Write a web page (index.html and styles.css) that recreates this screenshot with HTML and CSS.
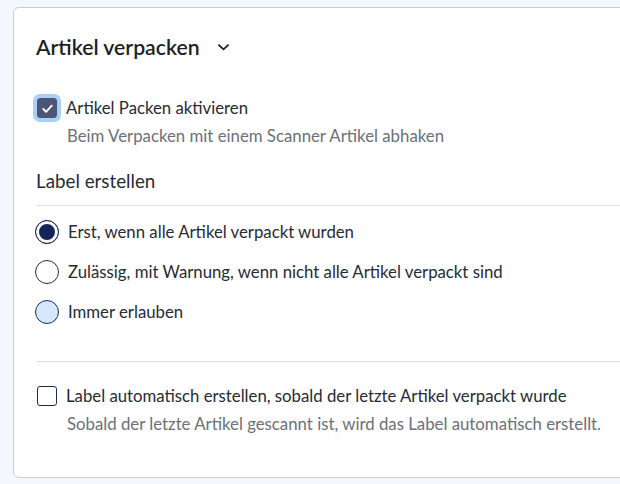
FILE: index.html
```html
<!doctype html>
<head>
	<meta charset="utf-8">
	<meta name="viewport" content="width=device-width, initial-scale=1.0">

	<title>Artikel verpacken</title>

	<link rel="stylesheet" href="styles.css">
</head>
<body>
	<section class="card">
		<h2 class="card-title">
			Artikel verpacken
			<svg class="chevron" viewBox="0 0 14 8" focusable="false">
				<path d="M1.5 1.5l5.5 5 5.5-5"></path>
			</svg>
		</h2>

		<div class="option">
			<label class="option-row">
				<span class="checkbox checked focused">
					<svg viewBox="0 0 16 16" focusable="false">
						<path d="M3.5 8.5l3 3 6-6.5"></path>
					</svg>
				</span>
				Artikel Packen aktivieren
			</label>
			<p class="option-hint">Beim Verpacken mit einem Scanner Artikel abhaken</p>
		</div>

		<h3 class="group-title">Label erstellen</h3>

		<div class="radio-list">
			<label class="option-row">
				<span class="radio selected"></span>
				Erst, wenn alle Artikel verpackt wurden
			</label>
			<label class="option-row">
				<span class="radio"></span>
				Zulässig, mit Warnung, wenn nicht alle Artikel verpackt sind
			</label>
			<label class="option-row">
				<span class="radio hover"></span>
				Immer erlauben
			</label>
		</div>

		<hr class="divider">

		<div class="option">
			<label class="option-row">
				<span class="checkbox"></span>
				Label automatisch erstellen, sobald der letzte Artikel verpackt wurde
			</label>
			<p class="option-hint">Sobald der letzte Artikel gescannt ist, wird das Label automatisch erstellt.</p>
		</div>
	</section>
</body>
</html>
```

FILE: styles.css
```css
body {
	margin: 0;
	overflow: hidden;
	background-color: #f4f8fd;
	font-family: Lato, "Noto Sans", sans-serif;
	color: #262b36;
}

.card {
	box-sizing: border-box;
	width: 620px;
	height: 471px;
	margin: 7px 0 0 13px;
	padding: 25px 0 0 22px;
	background-color: #fff;
	border: 1px solid #c9ccd1;
	border-radius: 6px;
}

.card-title {
	display: flex;
	align-items: center;
	gap: 17px;
	margin: 0;
	font-size: 21.2px;
	font-weight: 600;
	line-height: 28px;
	color: #1d1f24;
}

.chevron {
	width: 13px;
	height: 8px;
	fill: none;
	stroke: #1d1f24;
	stroke-width: 2;
}

.option {
	margin-top: 35px;
}

.option-row {
	display: flex;
	align-items: center;
	gap: 9px;
	font-size: 16.75px;
	line-height: 24px;
}

.option-hint {
	margin: 4px 0 0 31px;
	font-size: 16.8px;
	line-height: 24px;
	color: #6b7079;
}

.checkbox {
	box-sizing: border-box;
	display: flex;
	align-items: center;
	justify-content: center;
	width: 20px;
	height: 20px;
	margin-left: 1px;
	border: 1.5px solid #1b2b57;
	border-radius: 3px;
}

.checkbox.checked {
	background-color: #4b5677;
	border-color: #4b5677;
}

.checkbox.focused {
	box-shadow: 0 0 0 4px #a9d1f7;
}

.checkbox svg {
	width: 15px;
	height: 15px;
	fill: none;
	stroke: #fff;
	stroke-width: 2;
	stroke-linecap: round;
	stroke-linejoin: round;
}

.group-title {
	margin: 21px 0 0 0;
	padding-bottom: 12px;
	border-bottom: 1px solid #dcdee2;
	font-size: 18.8px;
	font-weight: 400;
	line-height: 24px;
}

.radio-list {
	display: flex;
	flex-direction: column;
	gap: 16px;
	margin-top: 14px;
}

.radio {
	box-sizing: border-box;
	flex: none;
	width: 24px;
	height: 24px;
	margin-left: -1px;
	border: 1.5px solid #1b2b57;
	border-radius: 50%;
	background-color: #fff;
}

.radio.selected {
	background-color: #13255a;
	box-shadow: inset 0 0 0 3px #fff;
}

.radio.hover {
	background-color: #d4e7fc;
}

.divider {
	margin: 37px 0 0 0;
	border: 0;
	border-top: 1px solid #dcdee2;
}

.divider + .option {
	margin-top: 22px;
}
```
